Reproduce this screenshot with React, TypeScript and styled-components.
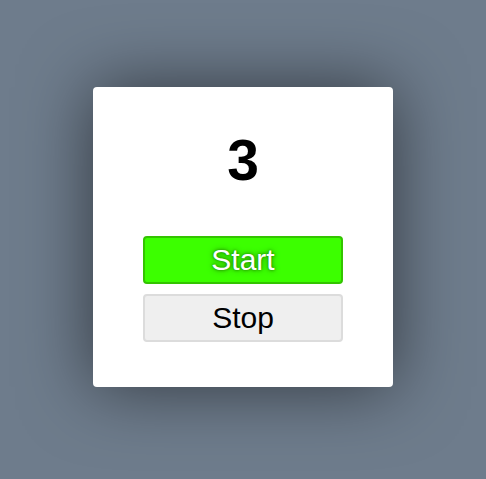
import styled, { createGlobalStyle } from "styled-components";

const Global = createGlobalStyle`
	html, body {
		margin: 0;
		padding: 0;
		height: 100%;
	}
	body {
		background-color: #6e7c8c;
		font-family: "Liberation Sans", Arial, sans-serif;
	}
	#root {
		height: 100%;
	}
`;

const Page = styled.div`
	display: flex;
	justify-content: center;
	align-items: flex-start;
	height: 479px;
	padding-top: 87px;
	box-sizing: border-box;
`;

const Card = styled.div`
	display: flex;
	flex-direction: column;
	align-items: center;
	width: 300px;
	height: 300px;
	box-sizing: border-box;
	padding-top: 41px;
	border-radius: 4px;
	background-color: white;
	box-shadow: 0 0 70px rgba(0,0,0,0.55);
`;

const Count = styled.div`
	height: 64px;
	line-height: 64px;
	font-size: 57px;
	font-weight: 700;
	color: black;
`;

const Buttons = styled.div`
	display: flex;
	flex-direction: column;
	gap: 10px;
	margin-top: 44px;
`;

const Button = styled.button<{ primary?: boolean }>`
	width: 200px;
	height: 48px;
	box-sizing: border-box;
	border-radius: 4px;
	border: 2px solid #dcdcdc;
	background-color: #efefef;
	color: black;
	font-family: "Liberation Sans", Arial, sans-serif;
	font-size: 30px;
	padding: 0;

	${({ primary }) => primary && `
		border-color: #33c400;
		background-color: #3cff00;
		color: white;
		text-shadow: 0 0 3px #1a7a00, 0 0 6px #2a9a00;
	`}
`;

export default function App() {
	return (
		<Page>
			<Global />
			<Card>
				<Count>3</Count>
				<Buttons>
					<Button primary>Start</Button>
					<Button>Stop</Button>
				</Buttons>
			</Card>
		</Page>
	);
}
